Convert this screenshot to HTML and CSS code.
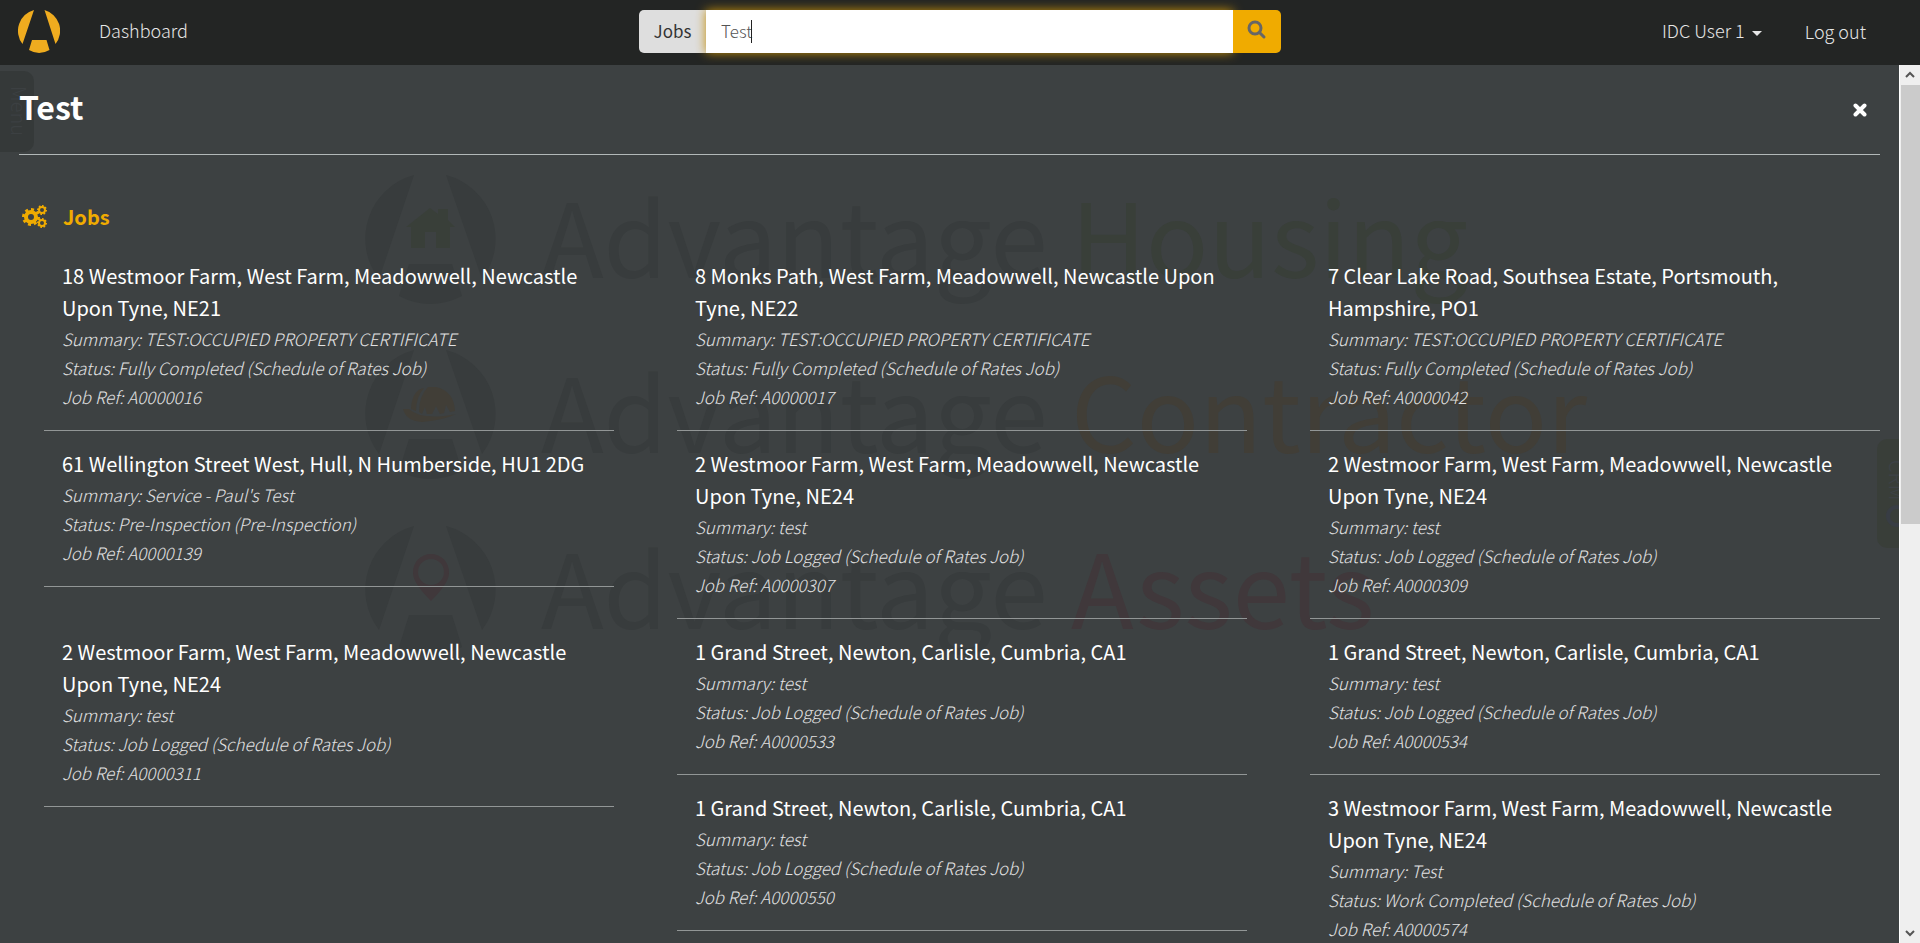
FILE: index.html
```html
<!DOCTYPE html>
<html lang="en">
<head>
<meta charset="utf-8">
<title>Search results - Test</title>
<link rel="stylesheet" href="styles.css">
</head>
<body>
<header class="navbar">
  <nav class="nav-left">
    <a class="brand" href="#" aria-label="Home">
      <svg width="42" height="44" viewBox="0 0 42 44"><path d="M16 0 4.500 34A21.500 21.500 0 0 1 16 0ZM26.500 0 37.500 34A21.500 21.500 0 0 0 26.500 0ZM14 30H28.500L31.500 40Q21 46 11 40Z"/></svg>
    </a>
    <a class="nav-link" href="#">Dashboard</a>
  </nav>
  <form class="search" role="search">
    <button class="scope" type="button">Jobs</button>
    <span class="field"><input class="query" type="text" value="Test" aria-label="Search"><span class="caret-bar"></span></span>
    <button class="go" type="submit" aria-label="Search">
      <svg width="20" height="20" viewBox="0 0 20 20"><circle cx="8" cy="8" r="6"/><path d="M12.500 12.500 17 17"/></svg>
    </button>
  </form>
  <nav class="nav-right">
    <a class="nav-link" href="#">IDC User 1 <span class="drop"></span></a>
    <a class="nav-link logout" href="#">Log out</a>
  </nav>
</header>
<div class="stage">
  <div class="backdrop" aria-hidden="true">
    <svg class="marks" viewBox="0 0 1240 490" width="1240" height="490">
      <defs>
        <g id="mark"><path d="M50 4 15 108A66 66 0 0 1 50 4ZM82 4 118 108A66 66 0 0 0 82 4ZM45 93H88L98 125Q66 141 35 125Z"/></g>
      </defs>
      <g class="ink">
        <use href="#mark" y="0"/><use href="#mark" y="175"/><use href="#mark" y="351"/>
        <text x="177" y="107">Advantage</text><text x="177" y="282">Advantage</text><text x="177" y="458">Advantage</text>
      </g>
      <g class="green"><text x="707" y="107">Housing</text><path d="M66 37 42 56H47V77H61V61H72V77H86V56H91L84 49V38H74V43Z"/></g>
      <g class="amber"><text x="707" y="282">Contractor</text><path d="M47 238Q48 219 60 217 52 226 52 240ZM55 241Q55 225 64 216H72Q90 220 91 240L86 241 82 234 80 242 76 243 72 235 68 243 63 243 61 236 58 243ZM45 238Q58 250 92 243 80 249 58 251 42 250 39 238Z"/></g>
      <g class="red"><text x="707" y="458">Assets</text><path fill-rule="evenodd" d="M67 383A18 18 0 0 1 85 402Q85 412 67 430Q49 412 49 402A18 18 0 0 1 67 383ZM67 388A13 13 0 1 0 67 414A13 13 0 1 0 67 388Z"/></g>
    </svg>
    <div class="tab tab-menu">Menu</div>
    <div class="tab tab-crm">CRM <span class="ring"></span></div>
  </div>
  <main class="panel">
    <div class="panel-head">
      <h1>Test</h1>
      <button class="close" type="button" aria-label="Close"><svg width="14" height="14" viewBox="0 0 14 14"><path d="M2.500 2.500 11.500 11.500M11.500 2.500 2.500 11.500"/></svg></button>
    </div>
    <h2 class="group">
      <svg width="26" height="24" viewBox="0 0 26 24"><g class="gear"><circle cx="9" cy="12" r="5"/><circle class="teeth" cx="9" cy="12" r="7" pathLength="16"/><circle class="sm" cx="20" cy="5" r="3"/><circle class="sm teeth" cx="20" cy="5" r="4" pathLength="16"/><circle class="sm" cx="20" cy="18" r="3"/><circle class="sm teeth" cx="20" cy="18" r="4" pathLength="16"/></g></svg>
      <span>Jobs</span>
    </h2>
    <div class="results">
      <article class="job"><h3>18 Westmoor Farm, West Farm, Meadowwell, Newcastle Upon Tyne, NE21</h3><p>Summary: TEST:OCCUPIED PROPERTY CERTIFICATE</p><p>Status: Fully Completed (Schedule of Rates Job)</p><p>Job Ref: A0000016</p></article>
      <article class="job"><h3>8 Monks Path, West Farm, Meadowwell, Newcastle Upon Tyne, NE22</h3><p>Summary: TEST:OCCUPIED PROPERTY CERTIFICATE</p><p>Status: Fully Completed (Schedule of Rates Job)</p><p>Job Ref: A0000017</p></article>
      <article class="job"><h3>7 Clear Lake Road, Southsea Estate, Portsmouth, Hampshire, PO1</h3><p>Summary: TEST:OCCUPIED PROPERTY CERTIFICATE</p><p>Status: Fully Completed (Schedule of Rates Job)</p><p>Job Ref: A0000042</p></article>
      <article class="job"><h3>61 Wellington Street West, Hull, N Humberside, HU1 2DG</h3><p>Summary: Service - Paul's Test</p><p>Status: Pre-Inspection (Pre-Inspection)</p><p>Job Ref: A0000139</p></article>
      <article class="job"><h3>2 Westmoor Farm, West Farm, Meadowwell, Newcastle Upon Tyne, NE24</h3><p>Summary: test</p><p>Status: Job Logged (Schedule of Rates Job)</p><p>Job Ref: A0000307</p></article>
      <article class="job"><h3>2 Westmoor Farm, West Farm, Meadowwell, Newcastle Upon Tyne, NE24</h3><p>Summary: test</p><p>Status: Job Logged (Schedule of Rates Job)</p><p>Job Ref: A0000309</p></article>
      <article class="job"><h3>2 Westmoor Farm, West Farm, Meadowwell, Newcastle Upon Tyne, NE24</h3><p>Summary: test</p><p>Status: Job Logged (Schedule of Rates Job)</p><p>Job Ref: A0000311</p></article>
      <article class="job"><h3>1 Grand Street, Newton, Carlisle, Cumbria, CA1</h3><p>Summary: test</p><p>Status: Job Logged (Schedule of Rates Job)</p><p>Job Ref: A0000533</p></article>
      <article class="job"><h3>1 Grand Street, Newton, Carlisle, Cumbria, CA1</h3><p>Summary: test</p><p>Status: Job Logged (Schedule of Rates Job)</p><p>Job Ref: A0000534</p></article>
      <article class="job"><h3>1 Grand Street, Newton, Carlisle, Cumbria, CA1</h3><p>Summary: test</p><p>Status: Job Logged (Schedule of Rates Job)</p><p>Job Ref: A0000550</p></article>
      <article class="job"><h3>3 Westmoor Farm, West Farm, Meadowwell, Newcastle Upon Tyne, NE24</h3><p>Summary: Test</p><p>Status: Work Completed (Schedule of Rates Job)</p><p>Job Ref: A0000574</p></article>
    </div>
  </main>
  <div class="scrollbar" aria-hidden="true">
    <svg width="10" height="20" viewBox="0 0 10 20"><path d="M1 12 5 8 9 12"/></svg>
    <div class="thumb"></div>
    <svg class="down" width="10" height="20" viewBox="0 0 10 20"><path d="M1 8 5 12 9 8"/></svg>
  </div>
</div>
</body>
</html>
```

FILE: styles.css
```css
* { box-sizing: border-box; }
html, body { height: 100%; }
body {
  margin: 0;
  display: flex;
  flex-direction: column;
  overflow: hidden;
  background: #3d4142;
  color: #fff;
  font-family: "Noto Sans CJK SC", "Noto Sans", sans-serif;
  font-size: 18px;
  font-weight: 300;
}
h1, h2, h3, p { margin: 0; }
button, input { font: inherit; border: 0; padding: 0; border-radius: 0; }

.navbar {
  flex: none;
  height: 65px;
  padding: 0 18px 2px 18px;
  background: #232524;
  display: grid;
  grid-template-columns: 1fr 642px 1fr;
  align-items: center;
}
.nav-left, .nav-right { display: flex; align-items: center; }
.nav-left { gap: 39px; }
.nav-right { justify-content: flex-end; gap: 43px; padding-right: 36px; }
.brand { display: block; height: 44px; fill: #efac1f; }
.nav-link { color: #e6e6e6; text-decoration: none; padding-bottom: 3px; }
.nav-link.logout { padding-bottom: 2px; }
.drop {
  display: inline-block;
  margin-left: 3px;
  vertical-align: middle;
  border: 5px solid transparent;
  border-top-color: #e6e6e6;
  border-bottom: 0;
}
.search { display: flex; height: 43px; }
.scope { width: 67px; background: #dedede; color: #333; font-weight: 400; font-size: 17px; border-radius: 5px 0 0 5px; padding-bottom: 2px; }
.field { flex: 1; position: relative; box-shadow: 0 0 10px #c48e08; }
.query { width: 100%; height: 100%; padding: 0 15px 2px; background: #fff; color: #555; font-size: 17px; outline: 0; }
.caret-bar { position: absolute; left: 45px; top: 10px; width: 1px; height: 23px; background: #222; }
.go { position: relative; width: 48px; background: #f0ab00; border-radius: 0 5px 5px 0; }
.go svg { fill: none; stroke: #666; stroke-width: 3; stroke-linecap: round; vertical-align: middle; margin-bottom: 6px; }

.stage { flex: 1; min-height: 0; display: flex; position: relative; overflow: hidden; }
.backdrop { position: absolute; inset: 0 21px 0 0; overflow: hidden; }
.marks { position: absolute; left: 364px; top: 106px; font-size: 103px; font-weight: 400; }
.ink { fill: #383c3d; }
.green { fill: #393f39; }
.amber { fill: #413e37; }
.red { fill: #40383b; }
.tab { position: absolute; writing-mode: vertical-rl; text-align: center; }
.tab-menu { left: 0; top: 6px; width: 34px; height: 81px; background: #353939; color: #3c4042; font-size: 20px; line-height: 30px; border-radius: 0 10px 10px 0; }
.tab-crm { right: -22px; top: 374px; width: 44px; height: 109px; background: #393e39; color: #3d4247; font-size: 20px; line-height: 24px; padding-right: 12px; border-radius: 10px 0 0 10px; }
.ring { display: inline-block; width: 22px; height: 22px; border: 4px solid #383d44; border-radius: 50%; }

.panel { flex: 1; min-width: 0; overflow: hidden; padding: 0 19px; position: relative; }
.panel-head {
  height: 90px;
  border-bottom: 1px solid #b2b8b8;
  padding-right: 13px;
  display: flex;
  justify-content: space-between;
  align-items: center;
}
.panel-head h1 { font-size: 32px; line-height: 44px; font-weight: 700; padding-bottom: 7px; }
.close { background: none; line-height: 0; }
.close svg { fill: none; stroke: #fff; stroke-width: 4; stroke-linecap: round; }
.group {
  display: flex;
  align-items: center;
  gap: 15px;
  padding: 46px 0 10px 3px;
  color: #f0ab00;
  font-size: 20px;
  line-height: 32px;
  font-weight: 700;
}
.gear circle { fill: none; stroke: #f0ab00; stroke-width: 4; }
.gear .teeth { stroke-width: 4; stroke-dasharray: 1 1; }
.gear .sm { stroke-width: 2; }
.results { margin: 0 -63px 0 25px; }
.job {
  float: left;
  width: calc(100% / 3 - 63px);
  margin-right: 63px;
  padding: 17px 18px 19px;
  border-bottom: 1px solid #929696;
}
.job h3 { font-size: 20px; line-height: 32px; font-weight: 400; }
.job p { font-size: 17px; line-height: 29px; font-style: italic; color: #e2e2e2; }

.scrollbar {
  flex: none;
  width: 21px;
  background: #efefef;
  border-left: 1px solid #fff;
  display: flex;
  flex-direction: column;
  align-items: center;
}
.scrollbar svg { flex: none; fill: none; stroke: #555; stroke-width: 2; }
.scrollbar .down { margin-top: auto; }
.thumb { width: 19px; height: 50%; background: #cbcbcb; }
```
